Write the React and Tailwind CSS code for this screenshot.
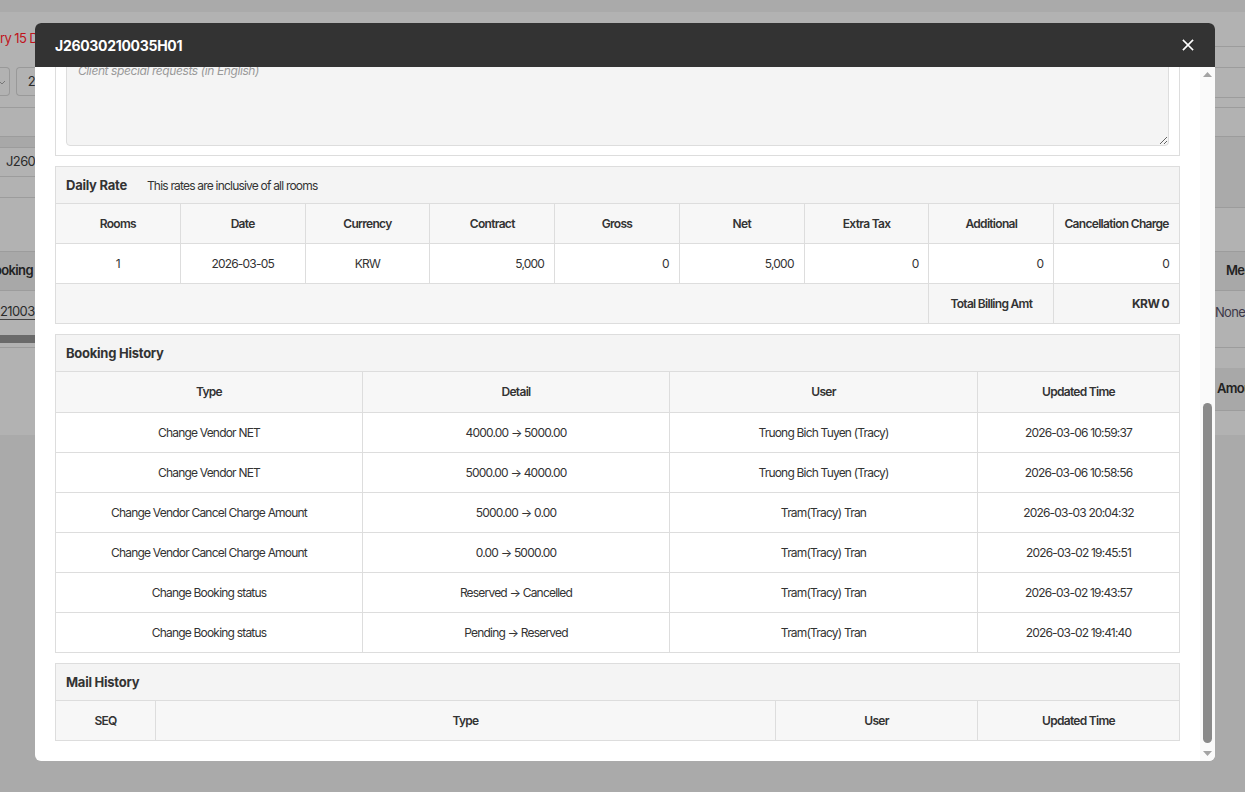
import React from "react";

const rateHead = ["Rooms", "Date", "Currency", "Contract", "Gross", "Net", "Extra Tax", "Additional", "Cancellation Charge"];
const rateRow = [
  { v: "1", a: "c" },
  { v: "2026-03-05", a: "c" },
  { v: "KRW", a: "c" },
  { v: "5,000", a: "r" },
  { v: "0", a: "r" },
  { v: "5,000", a: "r" },
  { v: "0", a: "r" },
  { v: "0", a: "r" },
  { v: "0", a: "r" },
];

const history = [
  ["Change Vendor NET", "4000.00 → 5000.00", "Truong Bich Tuyen (Tracy)", "2026-03-06 10:59:37"],
  ["Change Vendor NET", "5000.00 → 4000.00", "Truong Bich Tuyen (Tracy)", "2026-03-06 10:58:56"],
  ["Change Vendor Cancel Charge Amount", "5000.00 → 0.00", "Tram(Tracy) Tran", "2026-03-03 20:04:32"],
  ["Change Vendor Cancel Charge Amount", "0.00 → 5000.00", "Tram(Tracy) Tran", "2026-03-02 19:45:51"],
  ["Change Booking status", "Reserved → Cancelled", "Tram(Tracy) Tran", "2026-03-02 19:43:57"],
  ["Change Booking status", "Pending → Reserved", "Tram(Tracy) Tran", "2026-03-02 19:41:40"],
];

function LeftStrip() {
  return (
    <div className="w-[35px] shrink-0 overflow-hidden flex flex-col tracking-[-0.6px]">
      <div className="h-[12px] bg-[#aaaaaa]" />
      <div className="h-[423px] bg-[#b2b2b2] flex flex-col">
        <div className="h-[18px]" />
        <div className="h-[16px] flex items-center whitespace-nowrap text-[13px] text-[#c0141c] leading-none">ry 15 D</div>
        <div className="h-[21px]" />
        <div className="h-[29px] flex gap-[6px]">
          <div className="w-[12px] h-full border border-l-0 border-[#999] rounded-r-[4px] flex items-center">
            <svg width="6" height="6" viewBox="0 0 6 6" className="ml-[-1px]"><path d="M0 2 L3 5 L6 2" fill="none" stroke="#777" strokeWidth="1" /></svg>
          </div>
          <div className="flex-1 h-full border border-r-0 border-[#999] rounded-l-[4px] flex items-center pl-[11px] text-[13px] text-[#2b2b2b]">2</div>
        </div>
        <div className="h-[11px]" />
        <div className="h-[29px] border-t border-[#9c9c9c]" />
        <div className="h-[12px] bg-[#a8a8a8] border-t border-b border-[#9c9c9c]" />
        <div className="h-[29px] border-b border-[#9c9c9c] flex items-center pl-[6px] text-[13px] text-[#2b2b2b] whitespace-nowrap">J260</div>
        <div className="h-[21px] border-b border-[#9c9c9c]" />
        <div className="h-[53px]" />
        <div className="h-[40px] bg-[#a8a8a8] border-t border-b border-[#9c9c9c] flex items-center justify-end pr-[2px] text-[13px] font-semibold text-[#222] whitespace-nowrap">ooking</div>
        <div className="h-[40px] flex items-center whitespace-nowrap">
          <span className="text-[13px] text-[#2b2b2b] border-b border-[#444] leading-[16px]">21003</span>
        </div>
        <div className="h-[4px]" />
        <div className="h-[8px] bg-[#6a6a6a]" />
        <div className="h-[5px] border-b border-[#9c9c9c]" />
      </div>
      <div className="flex-1 bg-[#aaaaaa]" />
    </div>
  );
}

function RightStrip() {
  return (
    <div className="w-[30px] shrink-0 overflow-hidden flex flex-col tracking-[-0.7px]">
      <div className="h-[12px] bg-[#aaaaaa]" />
      <div className="h-[423px] bg-[#b2b2b2] flex flex-col">
        <div className="h-[35px] border-b border-[#9c9c9c]" />
        <div className="h-[21px] border-b border-[#9c9c9c]" />
        <div className="h-[30px] border-b border-[#9c9c9c]" />
        <div className="h-[10px] border-b border-[#9c9c9c]" />
        <div className="h-[29px] border-b border-[#9c9c9c]" />
        <div className="h-[71px] bg-[#aaaaaa] border-b border-[#9c9c9c]" />
        <div className="h-[43px]" />
        <div className="h-[40px] bg-[#a8a8a8] border-t border-b border-[#9c9c9c] flex items-center pl-[11px] text-[13px] font-semibold text-[#222] whitespace-nowrap">Meal</div>
        <div className="h-[57px] border-b border-[#9c9c9c] flex items-start pt-[12px] text-[13px] text-[#3c3848] whitespace-nowrap">None</div>
        <div className="h-[20px]" />
        <div className="h-[43px] bg-[#a8a8a8] border-b border-[#9c9c9c] flex items-center pl-[2px] text-[13px] font-semibold text-[#222] whitespace-nowrap">Amount</div>
      </div>
      <div className="flex-1 bg-[#aaaaaa]" />
    </div>
  );
}

function SectionHeader({ title, children }) {
  return (
    <div className="h-[37px] bg-[#f4f4f4] border-b border-[#dddddd] flex items-center px-[10px] pt-[2px]">
      <span className="text-[13px] font-bold text-[#333] tracking-[-0.25px]">{title}</span>
      {children}
    </div>
  );
}

function Modal() {
  return (
    <div className="absolute left-[35px] top-[23px] w-[1180px] h-[738px] rounded-[6px] overflow-hidden flex flex-col bg-white tracking-[-0.8px]">
      <div className="h-[44px] shrink-0 bg-[#333333] flex items-center justify-between pl-[20px] pr-[21px]">
        <span className="text-[14px] font-bold text-white tracking-[-0.3px]">J26030210035H01</span>
        <svg width="12" height="12" viewBox="0 0 12 12">
          <path d="M1.5 1.5 L10.5 10.5 M10.5 1.5 L1.5 10.5" stroke="#fff" strokeWidth="1.7" strokeLinecap="square" />
        </svg>
      </div>
      <div className="flex-1 flex overflow-hidden">
        <div className="flex-1 overflow-hidden px-[20px]">
          <div className="-mt-[20px] border border-[#dddddd] px-[10px] pt-[10px] pb-[9px]">
            <textarea
              className="block w-full h-[88px] bg-[#f4f4f4] border border-[#dddddd] rounded-[4px] px-[11px] py-[3px] text-[12px] leading-[18px] italic tracking-[-0.4px] text-[#333] placeholder:text-[#999] outline-none"
              placeholder="Client special requests (in English)"
            />
          </div>

          <div className="mt-[10px] border border-[#dddddd]">
            <SectionHeader title="Daily Rate">
              <span className="ml-[20px] text-[12px] text-[#333] tracking-[-0.8px]">This rates are inclusive of all rooms</span>
            </SectionHeader>
            <div className="grid grid-cols-9 h-[40px] bg-[#f7f7f7] border-b border-[#dddddd]">
              {rateHead.map((h, i) => (
                <div key={h} className={"flex items-center justify-center text-[12px] font-semibold text-[#333] whitespace-nowrap tracking-[-0.7px] " + (i < 8 ? "border-r border-[#dddddd]" : "")}>{h}</div>
              ))}
            </div>
            <div className="grid grid-cols-9 h-[40px] bg-white border-b border-[#dddddd]">
              {rateRow.map((c, i) => (
                <div key={i} className={"flex items-center text-[12px] text-[#333] " + (c.a === "c" ? "justify-center " : "justify-end pr-[10px] ") + (i < 8 ? "border-r border-[#dddddd]" : "")}>{c.v}</div>
              ))}
            </div>
            <div className="grid grid-cols-9 h-[39px] bg-[#f6f6f6]">
              <div className="col-span-7 border-r border-[#dddddd]" />
              <div className="flex items-center justify-center text-[12px] font-semibold text-[#333] border-r border-[#dddddd] tracking-[-0.7px]">Total Billing Amt</div>
              <div className="flex items-center justify-end pr-[10px] text-[12px] font-bold text-[#333] tracking-[-0.6px]">KRW 0</div>
            </div>
          </div>

          <div className="mt-[10px] border border-[#dddddd]">
            <SectionHeader title="Booking History" />
            <div className="grid grid-cols-[307px_307px_308px_1fr] h-[41px] bg-[#f7f7f7] border-b border-[#dddddd]">
              {["Type", "Detail", "User", "Updated Time"].map((h, i) => (
                <div key={h} className={"flex items-center justify-center text-[12px] font-semibold text-[#333] tracking-[-0.7px] " + (i < 3 ? "border-r border-[#dddddd]" : "")}>{h}</div>
              ))}
            </div>
            {history.map((r, ri) => (
              <div key={ri} className={"grid grid-cols-[307px_307px_308px_1fr] bg-white " + (ri < history.length - 1 ? "h-[40px] border-b border-[#dddddd]" : "h-[39px]")}>
                {r.map((c, i) => (
                  <div key={i} className={"flex items-center justify-center text-[12px] text-[#333] whitespace-nowrap " + (i < 3 ? "border-r border-[#dddddd]" : "")}>{c}</div>
                ))}
              </div>
            ))}
          </div>

          <div className="mt-[10px] border border-[#dddddd]">
            <SectionHeader title="Mail History" />
            <div className="grid grid-cols-[100px_620px_202px_1fr] h-[39px] bg-[#f7f7f7]">
              {["SEQ", "Type", "User", "Updated Time"].map((h, i) => (
                <div key={h} className={"flex items-center justify-center text-[12px] font-semibold text-[#333] tracking-[-0.7px] " + (i < 3 ? "border-r border-[#dddddd]" : "")}>{h}</div>
              ))}
            </div>
          </div>
        </div>
        <div className="w-[15px] shrink-0 bg-[#fafafa] flex flex-col">
          <div className="h-[15px] flex items-center justify-center">
            <svg width="9" height="5" viewBox="0 0 9 5"><polygon points="0,5 4.5,0 9,5" fill="#a3a3a3" /></svg>
          </div>
          <div className="flex-1 flex flex-col justify-end items-center pb-[3px]">
            <div className="w-[9px] h-[340px] rounded-full bg-[#8a8a8a]" />
          </div>
          <div className="h-[15px] flex items-center justify-center">
            <svg width="9" height="5" viewBox="0 0 9 5"><polygon points="0,0 4.5,5 9,0" fill="#a3a3a3" /></svg>
          </div>
        </div>
      </div>
    </div>
  );
}

export default function App() {
  return (
    <div className="relative w-full h-[792px] overflow-hidden flex bg-[#aaaaaa]" style={{ fontFamily: "Inter, 'Noto Sans', sans-serif" }}>
      <LeftStrip />
      <div className="flex-1 flex flex-col">
        <div className="h-[12px] bg-[#aaaaaa]" />
        <div className="h-[423px] bg-[#b2b2b2]" />
        <div className="flex-1 bg-[#aaaaaa]" />
      </div>
      <RightStrip />
      <Modal />
    </div>
  );
}
